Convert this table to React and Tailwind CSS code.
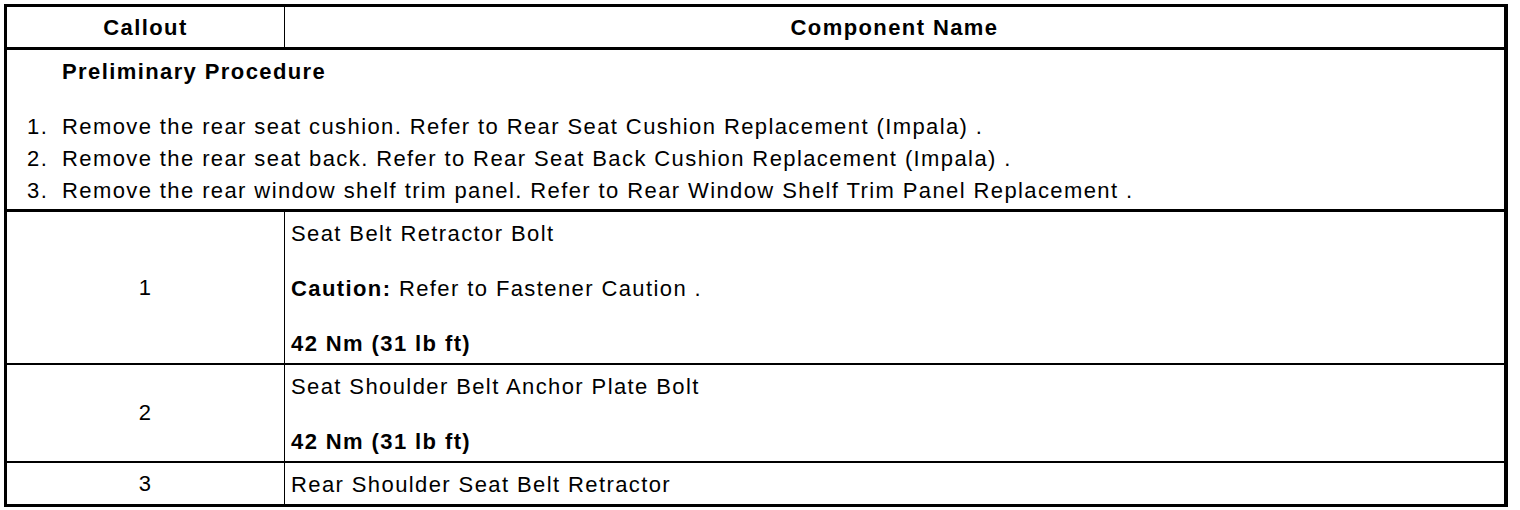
import React from "react";

const steps = [
  "Remove the rear seat cushion. Refer to Rear Seat Cushion Replacement (Impala) .",
  "Remove the rear seat back. Refer to Rear Seat Back Cushion Replacement (Impala) .",
  "Remove the rear window shelf trim panel. Refer to Rear Window Shelf Trim Panel Replacement .",
];

const Row = ({ callout, border, children }) => (
  <div className={`flex ${border}`}>
    <div className="w-[278px] shrink-0 border-r border-black flex items-center justify-center">
      {callout}
    </div>
    <div className="flex-1 pl-[6px] pt-[9px] pb-[6px]">{children}</div>
  </div>
);

export default function App() {
  return (
    <div className="bg-white min-h-[510px] pt-[4px] pl-[4px]">
      <div
        className="w-[1504px] border-l-[3px] border-t-[3px] border-r-[4px] border-b-[3px] border-black text-black text-[22px] leading-[26px] tracking-[1.4px]"
        style={{ fontFamily: '"Liberation Sans", Arial, sans-serif' }}
      >
        {/* header */}
        <div className="flex border-b-[3px] border-black font-bold">
          <div className="w-[278px] shrink-0 border-r border-black text-center pt-[8px] pb-[6px]">
            Callout
          </div>
          <div className="flex-1 text-center pt-[8px] pb-[6px]">Component Name</div>
        </div>

        {/* preliminary */}
        <div className="border-b-[3px] border-black pt-[9px] pb-[2px]">
          <div className="pl-[55px] font-bold">Preliminary Procedure</div>
          <ol className="mt-[26px]">
            {steps.map((s, i) => (
              <li key={i} className="flex leading-[32px] pl-[20px]">
                <span className="w-[35px] shrink-0">{i + 1}.</span>
                <span>{s}</span>
              </li>
            ))}
          </ol>
        </div>

        <Row callout="1" border="border-b-2 border-black">
          <p>Seat Belt Retractor Bolt</p>
          <p className="mt-[29px]">
            <span className="font-bold">Caution:</span> Refer to Fastener Caution .
          </p>
          <p className="mt-[29px] font-bold">42 Nm (31 lb ft)</p>
        </Row>

        <Row callout="2" border="border-b-2 border-black">
          <p>Seat Shoulder Belt Anchor Plate Bolt</p>
          <p className="mt-[29px] font-bold">42 Nm (31 lb ft)</p>
        </Row>

        <Row callout="3" border="">
          <p>Rear Shoulder Seat Belt Retractor</p>
        </Row>
      </div>
    </div>
  );
}
